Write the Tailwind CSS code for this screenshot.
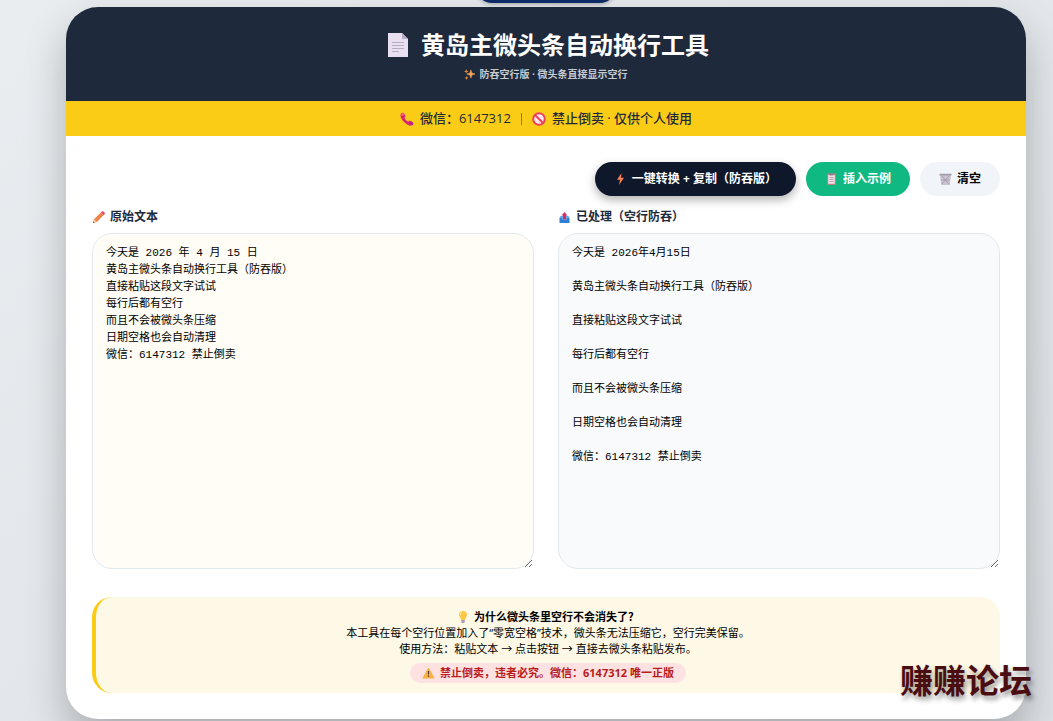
<!DOCTYPE html>
<html lang="zh-CN">
<head>
    <meta charset="UTF-8">
    <meta name="viewport" content="width=device-width, initial-scale=1.0">
    <title>黄岛主微头条自动换行工具</title>
    <script src="https://cdn.jsdelivr.net/npm/@tailwindcss/browser@4"></script>
</head>
<body class="relative min-h-screen overflow-x-hidden bg-linear-to-br from-[#e9edf0] to-[#dde1e5] pt-[7px] pr-[27px] pl-[66px] font-['Open_Sans','Noto_Sans_CJK_SC',sans-serif] text-black">
    <!-- Main Card -->
    <main class="relative w-full overflow-hidden rounded-[32px] bg-white shadow-[0_20px_40px_rgba(0,0,0,0.25)]">
        <header class="bg-[#1e293b] py-5 text-center text-white">
            <h1 class="flex items-center justify-center gap-2 text-2xl leading-9 font-bold">
                <svg class="h-6 w-[30px]" viewBox="0 0 20 24">
                    <path d="M0 0h14l6 6v18H0z" fill="#e8e0f1"/>
                    <path d="M14 0l6 6h-6z" fill="#b9a9cb"/>
                    <path d="M4 9.500h12M4 12.500h12M4 15.500h12M4 18.500h7" stroke="#b7acc4" stroke-width="1.200"/>
                </svg>
                黄岛主微头条自动换行工具
            </h1>
            <p class="mt-1 flex items-center justify-center gap-1 text-[10px] leading-[14px] font-bold text-[#c6cad0]">
                <svg class="h-[11px] w-[11px]" viewBox="0 0 12 12">
                    <path d="M7.500 1l1.100 3.400L12 5.500 8.600 6.600 7.500 10 6.400 6.600 3 5.500l3.400-1.100z" fill="#f2a65a" stroke="#f2a65a" stroke-width=".6"/>
                    <path d="M2.500 0l.7 1.800L5 2.500l-1.800.7L2.500 5l-.7-1.800L0 2.500l1.800-.7zM2.800 7.500l.6 1.600 1.600.6-1.600.6-.6 1.600-.6-1.600-1.600-.6 1.600-.6z" fill="#e58b45"/>
                </svg>
                防吞空行版 · 微头条直接显示空行
            </p>
        </header>

        <div class="flex items-center justify-center bg-[#facc15] text-[13px] leading-[35px] font-medium text-[#1e293b]">
            <svg class="mr-[6px] h-[14px] w-[14px]" viewBox="0 0 14 14">
                <path d="M1 1.500C2 .3 3.200.4 4 1.500l1.200 2c.5.900.1 1.600-.8 2.300.8 1.700 2.100 3 3.800 3.900.7-.9 1.500-1.200 2.300-.7l2 1.300c1 .8 1.100 1.900 0 2.800-1.500 1.200-4.300.8-7.600-2.300C1.300 7.700-.5 4 1 1.500z" fill="#d9266f"/>
                <path d="M1 1.500C2 .3 3.200.4 4 1.500l.7 1.200-2.600 1.600C1.200 3.500.8 2.300 1 1.500z" fill="#ef5b7c"/>
                <path d="M9.700 11.500l1.500-2.200 1.300 1c.9.700 1 1.700.2 2.500z" fill="#b3239b"/>
            </svg>
            <span>微信：6147312</span>
            <span class="mx-[10px] h-3 w-px bg-[#8a7a2b]"></span>
            <svg class="mr-[6px] h-[14px] w-[14px]" viewBox="0 0 14 14">
                <circle cx="7" cy="7" r="5.800" fill="#fde8ea" stroke="#ee3f5f" stroke-width="2"/>
                <path d="M3 3l8 8" stroke="#ee3f5f" stroke-width="2"/>
            </svg>
            <span>禁止倒卖 · 仅供个人使用</span>
        </div>

        <div class="p-[26px]">
            <!-- Buttons -->
            <div class="flex justify-end gap-[10px] text-[12px] leading-[34px] font-bold">
                <button type="button" id="convert-btn" class="flex items-center gap-[5px] rounded-full bg-[#0f172a] px-[19px] text-white shadow-[0_4px_10px_rgba(0,0,0,0.3)]">
                    <svg class="h-3 w-[13px]" viewBox="0 0 13 12">
                        <path d="M7.500 0L3 6.800h3L5 12l5-7.200H7z" fill="#f8834f"/>
                    </svg>
                    一键转换 + 复制（防吞版）
                </button>
                <button type="button" id="sample-btn" class="flex items-center gap-[5px] rounded-full bg-[#10b981] px-[19px] text-white">
                    <svg class="h-3 w-[13px]" viewBox="0 0 13 12">
                        <rect x="2" y=".5" width="9" height="11.500" rx="1" fill="#bd7f76"/>
                        <path d="M3.200 2h6.600v8.800H3.200z" fill="#f1e5ec"/>
                        <path d="M4.500 0h4v2.500h-4z" fill="#8d8094"/>
                        <path d="M4.300 4.500h4.400M4.300 6.500h4.400M4.300 8.500h4.400" stroke="#a991a8" stroke-width=".8"/>
                    </svg>
                    插入示例
                </button>
                <button type="button" id="clear-btn" class="flex items-center gap-[5px] rounded-full bg-[#f1f5f9] px-[19px] text-black">
                    <svg class="h-3 w-[13px]" viewBox="0 0 13 12">
                        <path d="M1 1.500h11L10.800 12H2.200z" fill="#c9c2cf"/>
                        <path d="M.5.8h12v1.700H.5z" fill="#a49cad"/>
                        <path d="M3 3l7 8M10 3l-7 8M2.500 7h8" stroke="#9d95a8" stroke-width=".7"/>
                    </svg>
                    清空
                </button>
            </div>

            <!-- Text Areas -->
            <div class="mt-3 grid grid-cols-2 gap-6">
                <div>
                    <label for="source-text" class="mb-[7px] flex items-center gap-[5px] text-[12px] leading-[18px] font-bold text-[#1e293b]">
                        <svg class="h-[13px] w-[13px]" viewBox="0 0 13 13">
                            <path d="M1 12l1-3.700L8.800 1.500l2.800 2.800L4.800 11z" fill="#f0854a"/>
                            <path d="M8.800 1.500l1-1c.5-.5 1.200-.4 1.700 0l1 1.100c.5.500.5 1.200 0 1.700l-.9 1z" fill="#e2506f"/>
                            <path d="M1 12l1-3.700L4.800 11z" fill="#f4c9a0"/>
                            <path d="M1 12l.4-1.500 1.100 1.100z" fill="#503a4d"/>
                        </svg>
                        原始文本
                    </label>
                    <textarea id="source-text" spellcheck="false" class="block h-[336px] w-full resize-y rounded-[20px] border border-[#e2e8f0] bg-[#fffdf5] px-[13px] py-[11px] font-['Liberation_Mono','Noto_Sans_CJK_SC',monospace] text-[11px] leading-[17px] outline-none">今天是 2026 年 4 月 15 日
黄岛主微头条自动换行工具（防吞版）
直接粘贴这段文字试试
每行后都有空行
而且不会被微头条压缩
日期空格也会自动清理
微信：6147312 禁止倒卖</textarea>
                </div>
                <div>
                    <label for="result-text" class="mb-[7px] flex items-center gap-[5px] text-[12px] leading-[18px] font-bold text-[#1e293b]">
                        <svg class="h-[13px] w-[13px]" viewBox="0 0 13 13">
                            <path d="M1.500 7h10v5H1.500z" fill="#2f7fd6"/>
                            <path d="M1.500 7h2l1 2h4l1-2h2l-1-2h-8z" fill="#67a7e8"/>
                            <path d="M6.500 1L9.500 4.500H8v4H5v-4H3.500z" fill="#d62f6c"/>
                        </svg>
                        已处理（空行防吞）
                    </label>
                    <textarea id="result-text" readonly spellcheck="false" class="block h-[336px] w-full resize-y rounded-[20px] border border-[#e2e8f0] bg-[#f8fafc] px-[13px] py-[11px] font-['Liberation_Mono','Noto_Sans_CJK_SC',monospace] text-[11px] leading-[17px] outline-none">今天是 2026年4月15日

黄岛主微头条自动换行工具（防吞版）

直接粘贴这段文字试试

每行后都有空行

而且不会被微头条压缩

日期空格也会自动清理

微信：6147312 禁止倒卖</textarea>
                </div>
            </div>

            <!-- Info Box -->
            <section class="mt-7 rounded-[20px] border-l-4 border-[#facc15] bg-[#fef8e6] pt-3 pb-[10px] text-center text-[11px] leading-4">
                <h2 class="flex items-center justify-center gap-[5px] font-bold">
                    <svg class="h-3 w-3" viewBox="0 0 12 12">
                        <path d="M6 0c2.400 0 4 1.700 4 3.800C10 5.800 8.300 6.500 8 9H4c-.3-2.500-2-3.200-2-5.200C2 1.700 3.600 0 6 0z" fill="#fbc849"/>
                        <path d="M4.800 1.500c-1 .4-1.500 1.300-1.400 2.500" stroke="#fff0b8" fill="none"/>
                        <path d="M4.200 9h3.600v1.800L7 12H5l-.8-1.200z" fill="#a9a0ae"/>
                    </svg>
                    为什么微头条里空行不会消失了？
                </h2>
                <p>本工具在每个空行位置加入了“零宽空格”技术，微头条无法压缩它，空行完美保留。</p>
                <p>使用方法：粘贴文本 → 点击按钮 → 直接去微头条粘贴发布。</p>
                <p class="mx-auto mt-[6px] flex w-fit items-center gap-[5px] rounded-full bg-[#fee2e2] px-3 leading-5 font-bold text-[#b91c1c]">
                    <svg class="h-3 w-[13px]" viewBox="0 0 14 12">
                        <path d="M7 .8L13 11.500H1z" fill="#f9b042" stroke="#f9b042" stroke-linejoin="round"/>
                        <path d="M6.300 3.800h1.400l-.3 4h-.8zM6.300 8.700h1.400v1.400H6.300z" fill="#4a3942"/>
                    </svg>
                    禁止倒卖，违者必究。微信：6147312 唯一正版
                </p>
            </section>
        </div>
    </main>

    <!-- Floating tab at the top edge -->
    <div class="absolute -top-8 left-[475px] h-[35px] w-[142px] rounded-full bg-[#0b2a66] shadow-[0_1px_4px_rgba(0,0,0,0.3)]"></div>

    <!-- Forum mark -->
    <div class="absolute right-[21px] bottom-[22px] text-[33px] leading-9 font-bold text-[#4a0d12] [text-shadow:2px_4px_5px_rgba(0,0,0,0.4)]">赚赚论坛</div>

    <script>
        const sourceText = document.getElementById('source-text');
        const resultText = document.getElementById('result-text');
        const sampleText = sourceText.value;

        // 空行里放零宽空格，避免被压缩
        function convertText(text) {
            return text
                .replace(/(\d+)\s*年\s*(\d+)\s*月\s*(\d+)\s*日/g, '$1年$2月$3日')
                .split('\n')
                .filter(line => line.trim())
                .join('\n\u200B\n');
        }

        document.getElementById('convert-btn').addEventListener('click', async () => {
            resultText.value = convertText(sourceText.value);
            try {
                await navigator.clipboard.writeText(resultText.value);
            } catch (error) {
                console.error(error.message);
            }
        });

        document.getElementById('sample-btn').addEventListener('click', () => {
            sourceText.value = sampleText;
        });

        document.getElementById('clear-btn').addEventListener('click', () => {
            sourceText.value = '';
            resultText.value = '';
        });
    </script>
</body>
</html>
